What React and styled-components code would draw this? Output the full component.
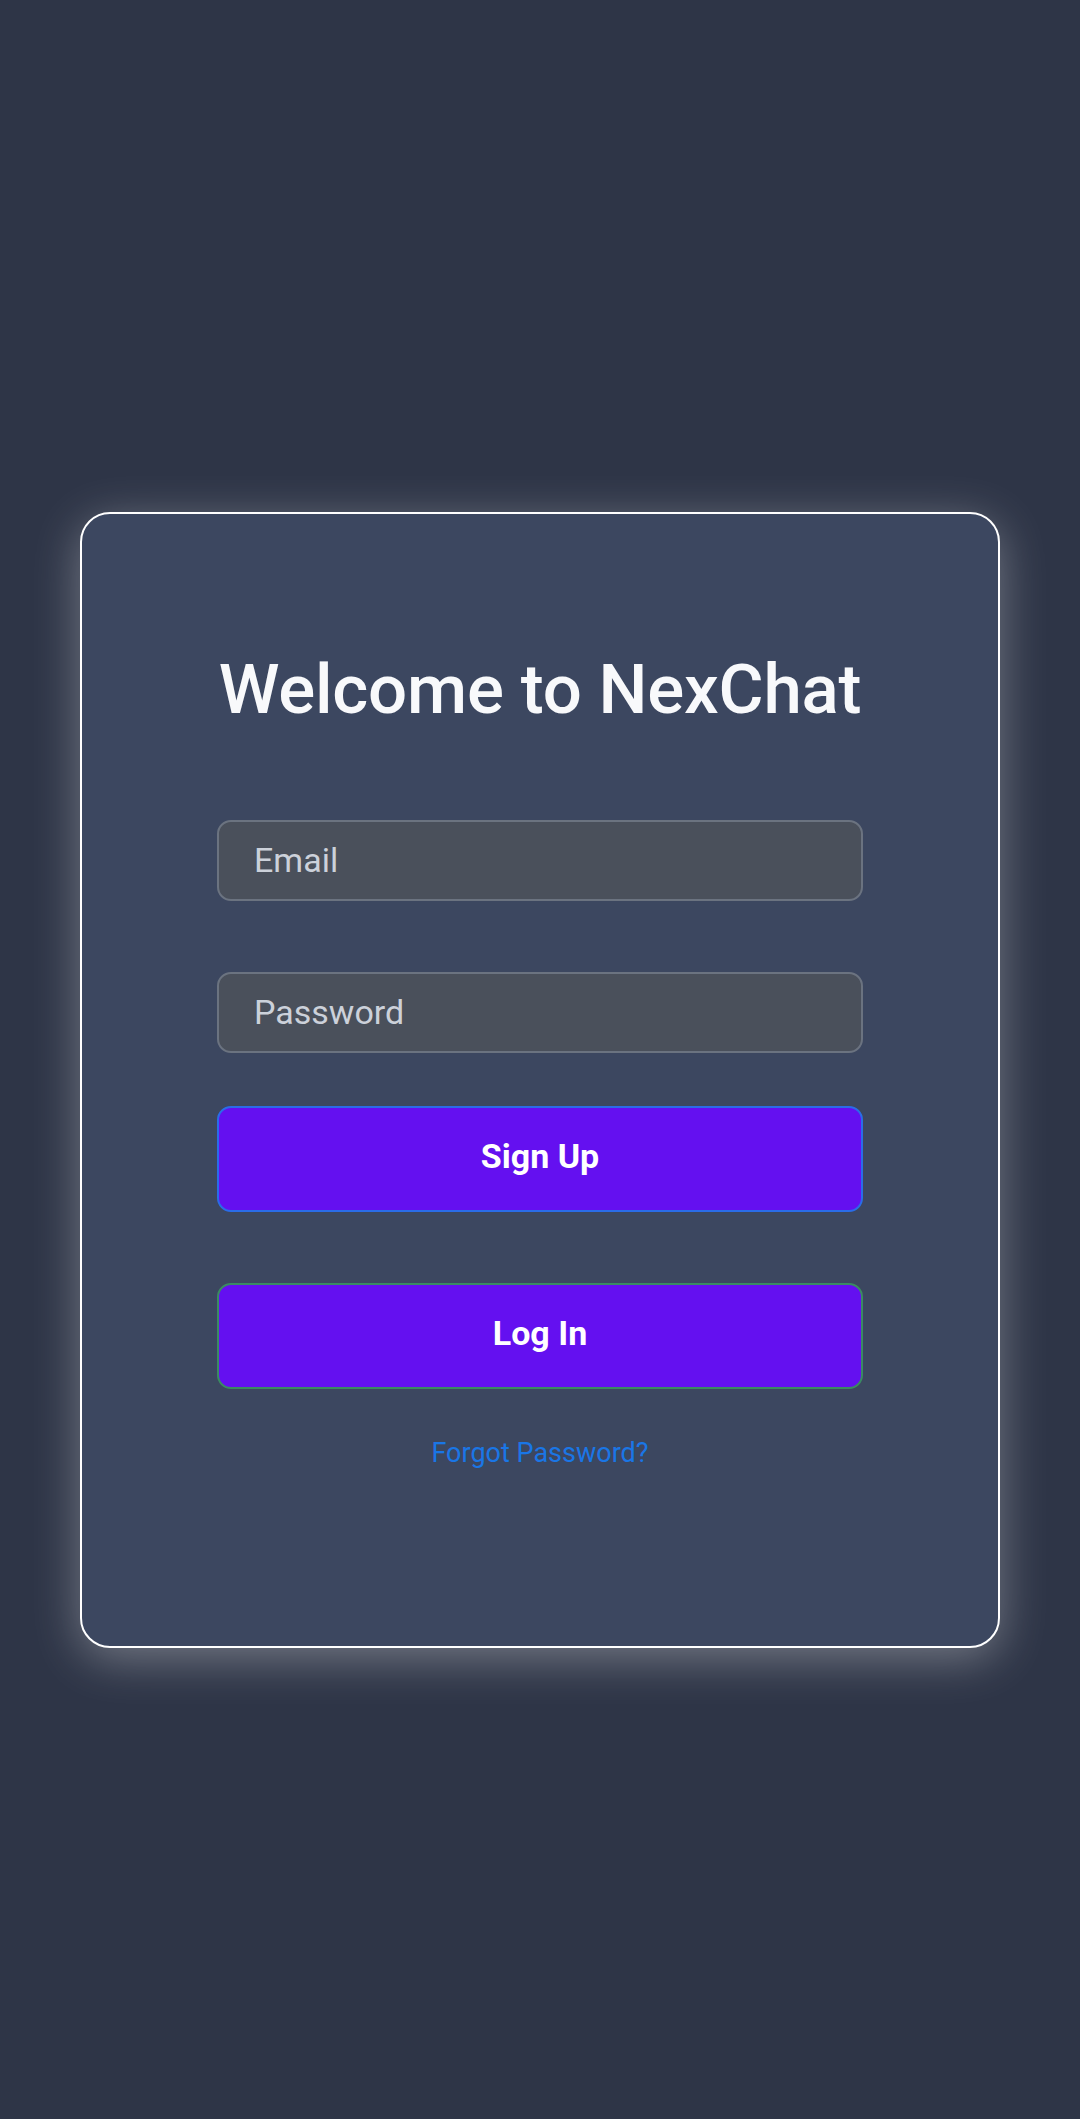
import React, { useState } from 'react';
import styled, { createGlobalStyle } from 'styled-components';

const GlobalStyle = createGlobalStyle`
    html, body {
        margin: 0;
        padding: 0;
        background-color: #2e3547;
        font-family: Roboto, "Liberation Sans", sans-serif;
    }
    * {
        box-sizing: border-box;
    }
`

const Page = styled.div`
    min-height: 100vh;
    padding-top: 40px;
    display: flex;
    align-items: center;
    justify-content: center;
`

const Card = styled.div`
    width: 920px;
    padding: 134px 135px 176px;
    background-color: #3c4760;
    border: 2px solid #ffffff;
    border-radius: 30px;
    box-shadow: 0 10px 48px rgba(255, 255, 255, 0.34);
    display: flex;
    flex-direction: column;
`

const Title = styled.h1`
    margin: 0 0 88px;
    font-size: 69px;
    font-weight: 500;
    line-height: 84px;
    letter-spacing: -0.2px;
    color: #f8f9fb;
    text-align: center;
    white-space: nowrap;
`

const Input = styled.input`
    height: 81px;
    width: 100%;
    margin-bottom: ${(props) => props.$gap}px;
    padding: 0 35px;
    background-color: #4a505b;
    border: 2px solid #6b7380;
    border-radius: 14px;
    font-family: inherit;
    font-size: 34px;
    color: #e6e9ee;
    outline: none;

    &::placeholder {
        color: #ccd1da;
    }
`

const Button = styled.button`
    height: 106px;
    width: 100%;
    margin-bottom: ${(props) => props.$gap}px;
    padding: 0 0 5px;
    background-color: #6410f0;
    border: 2px solid ${(props) => props.$edge};
    border-radius: 14px;
    font-family: inherit;
    font-size: 34px;
    font-weight: 700;
    color: #ffffff;
    cursor: pointer;
`

const ForgotLink = styled.a`
    align-self: center;
    font-size: 27px;
    line-height: 33px;
    color: #1a76e6;
    text-decoration: none;
    cursor: pointer;
`

const App = () => {
    const [email, setEmail] = useState("");
    const [password, setPassword] = useState("");

    const handleSubmit = (e) => {
        e.preventDefault()
    }

    return (
        <Page>
            <GlobalStyle />
            <Card as="form" onSubmit={handleSubmit}>
                <Title>Welcome to NexChat</Title>
                <Input
                    type="email"
                    placeholder="Email"
                    value={email}
                    onChange={(e) => setEmail(e.target.value)}
                    $gap={71}
                />
                <Input
                    type="password"
                    placeholder="Password"
                    value={password}
                    onChange={(e) => setPassword(e.target.value)}
                    $gap={53}
                />
                <Button type="submit" $edge="#2a6ce8" $gap={71}>Sign Up</Button>
                <Button type="button" $edge="#3a8a62" $gap={48}>Log In</Button>
                <ForgotLink>Forgot Password?</ForgotLink>
            </Card>
        </Page>
    )
}

export default App;
